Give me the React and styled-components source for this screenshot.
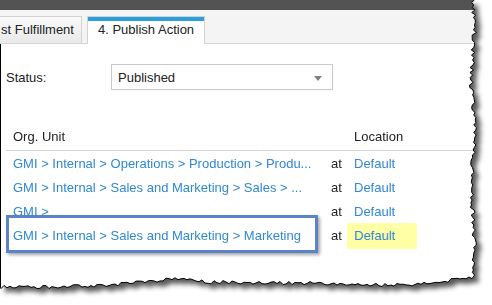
import React from "react";
import styled, { createGlobalStyle } from "styled-components";

// deterministic jitter for the torn paper edge
const rnd = (i) => {
  const s = Math.sin(i * 127.1 + 311.7) * 43758.5453;
  return s - Math.floor(s);
};

const bottomBase = [
  [0, 287], [60, 287], [110, 285], [150, 281], [175, 279], [210, 282],
  [260, 283], [320, 283], [370, 285], [420, 284], [445, 281], [474, 277],
];

const baseAt = (x) => {
  for (let i = 0; i < bottomBase.length - 1; i++) {
    const [x0, y0] = bottomBase[i];
    const [x1, y1] = bottomBase[i + 1];
    if (x >= x0 && x <= x1) return y0 + ((x - x0) / (x1 - x0)) * (y1 - y0);
  }
  return 287;
};

const edge = [];
for (let y = 0; y <= 276; y += 2.5) {
  edge.push([473 + (rnd(y) - 0.5) * 4.5 + Math.sin(y / 17) * 1.4, y]);
}
for (let x = 472; x >= 0; x -= 3) {
  edge.push([x, baseAt(x) + (rnd(x + 1000) - 0.5) * 3.5]);
}
edge.push([0, 287]);

const clip = `polygon(0px 0px, ${edge
  .map(([x, y]) => `${x.toFixed(1)}px ${y.toFixed(1)}px`)
  .join(", ")})`;
const edgePoints = edge.map(([x, y]) => `${x.toFixed(1)},${y.toFixed(1)}`).join(" ");

const GlobalStyle = createGlobalStyle`
  html, body {
    margin: 0;
    padding: 0;
    background: #fff;
  }
  body {
    font-family: "Liberation Sans", Arial, sans-serif;
    font-size: 13px;
    color: #222;
  }
`;

const Frame = styled.div`
  position: relative;
  width: 492px;
  height: 305px;
  overflow: hidden;
  background: #fff;
`;

const Shadow = styled.div`
  filter: drop-shadow(5px 5px 2.5px rgba(0, 0, 0, 0.65));
`;

const Paper = styled.div`
  width: 492px;
  height: 305px;
  background: #fff;
  display: flex;
  flex-direction: column;
  clip-path: ${clip};
`;

const Edge = styled.svg`
  position: absolute;
  left: 0;
  top: 0;
  pointer-events: none;
`;

const TopBar = styled.div`
  height: 10px;
  background: #535353;
  flex: none;
`;

const TabStrip = styled.div`
  height: 27px;
  padding-top: 6px;
  background: #f4f4f4;
  border-bottom: 1px solid #d6d6d6;
  display: flex;
  align-items: flex-start;
  gap: 5px;
  flex: none;
`;

const Tab = styled.div`
  box-sizing: border-box;
  height: ${(p) => (p.$active ? "28px" : "27px")};
  line-height: 26px;
  padding: 0 10px;
  border: 1px solid #d2d2d2;
  border-bottom: none;
  color: #222;
  white-space: nowrap;
  background: ${(p) =>
    p.$active ? "#fff" : "linear-gradient(#f9f9f9, #e9e9e9)"};
  box-shadow: ${(p) => (p.$active ? "inset 0 4px 0 #2a9fd9" : "none")};
  &:first-child {
    border-left: none;
    padding: 0 7px 0 1px;
  }
`;

const Content = styled.div`
  flex: 1;
  border-left: 1px solid #000;
  padding: 20px 0 0 5px;
`;

const FieldRow = styled.div`
  display: flex;
  align-items: center;
`;

const Label = styled.div`
  width: 105px;
  color: #222;
`;

const Select = styled.div`
  box-sizing: border-box;
  width: 222px;
  height: 26px;
  border: 1px solid #c9c9c9;
  padding: 0 10px 0 6px;
  display: flex;
  align-items: center;
  justify-content: space-between;
  color: #222;
`;

const Caret = styled.span`
  width: 0;
  height: 0;
  border-left: 4px solid transparent;
  border-right: 4px solid transparent;
  border-top: 5px solid #808080;
  margin-top: 2px;
`;

const Table = styled.div`
  margin-top: 33px;
`;

const Row = styled.div`
  position: relative;
  display: grid;
  grid-template-columns: 318px 23px 1fr;
  align-items: center;
  height: ${(p) => (p.$head ? "27px" : "24px")};
  border-bottom: ${(p) => (p.$head ? "1px solid #d4d4d4" : "none")};
  ${(p) =>
    p.$boxed &&
    `
    &::after {
      content: "";
      position: absolute;
      left: 0;
      top: -8px;
      width: 312px;
      height: 38px;
      box-sizing: border-box;
      border: 3px solid #5b83c9;
      box-shadow: 2px 2px 3px rgba(0, 0, 0, 0.35);
      pointer-events: none;
    }
  `}
`;

const Cell = styled.div`
  padding-left: 7px;
  white-space: nowrap;
  overflow: hidden;
  color: ${(p) => (p.$link ? "#3088d4" : "#222")};
`;

const Mark = styled.span`
  display: inline-block;
  margin: 2px 0 0 -8px;
  padding: 0 22px 0 8px;
  height: 26px;
  line-height: 26px;
  background: #ffffa6;
`;

const rows = [
  { unit: "GMI > Internal > Operations > Production > Produ...", loc: "Default" },
  { unit: "GMI > Internal > Sales and Marketing > Sales > ...", loc: "Default" },
  { unit: "GMI >", loc: "Default" },
  { unit: "GMI > Internal > Sales and Marketing > Marketing", loc: "Default", boxed: true },
];

export default function App() {
  return (
    <Frame>
      <GlobalStyle />
      <Shadow>
        <Paper>
          <TopBar />
          <TabStrip>
            <Tab>st Fulfillment</Tab>
            <Tab $active>4. Publish Action</Tab>
          </TabStrip>
          <Content>
            <FieldRow>
              <Label>Status:</Label>
              <Select>
                Published
                <Caret />
              </Select>
            </FieldRow>
            <Table>
              <Row $head>
                <Cell>Org. Unit</Cell>
                <Cell />
                <Cell>Location</Cell>
              </Row>
              {rows.map((r, i) => (
                <Row key={i} $boxed={r.boxed}>
                  <Cell $link>{r.unit}</Cell>
                  <Cell>at</Cell>
                  <Cell $link>{r.boxed ? <Mark>{r.loc}</Mark> : r.loc}</Cell>
                </Row>
              ))}
            </Table>
          </Content>
        </Paper>
      </Shadow>
      <Edge width="492" height="305">
        <polyline points={edgePoints} fill="none" stroke="#000" strokeWidth="1" />
      </Edge>
    </Frame>
  );
}
